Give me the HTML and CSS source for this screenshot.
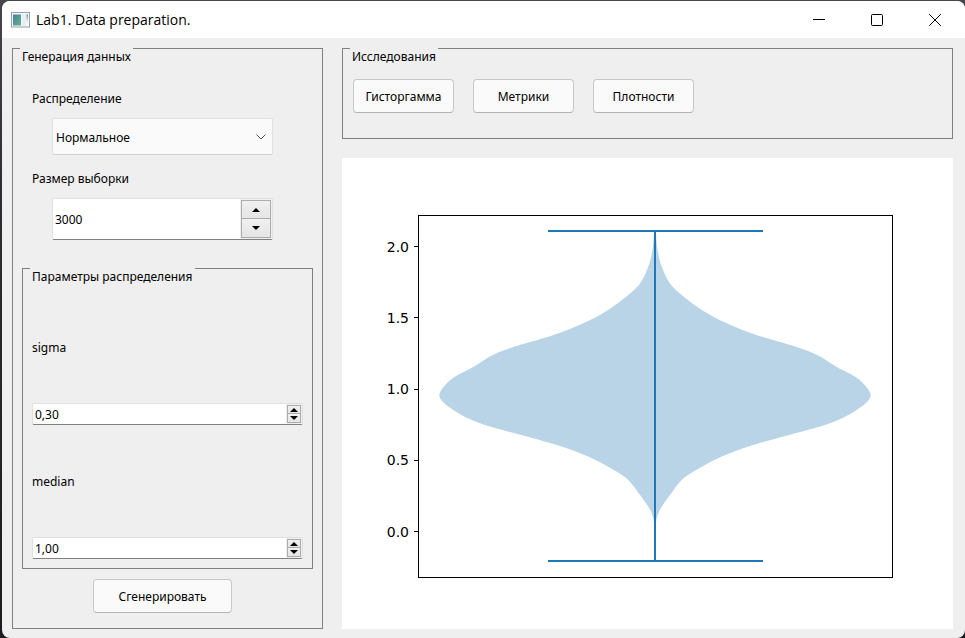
FILE: index.html
```html
<!DOCTYPE html>
<html lang="ru">
<head>
<meta charset="utf-8">
<meta name="viewport" content="width=device-width, initial-scale=1">
<title>Lab1. Data preparation.</title>
<link rel="stylesheet" href="styles.css">
</head>
<body>
<div class="window">
  <header class="titlebar">
    <svg class="app-icon" viewBox="0 0 19 16" aria-hidden="true">
      <defs>
        <linearGradient id="pane" x1="0" y1="0" x2="1" y2="1">
          <stop offset="0" stop-color="#4a7fa6"/>
          <stop offset="1" stop-color="#5fb58a"/>
        </linearGradient>
        <linearGradient id="side" x1="0" y1="0" x2="0" y2="1">
          <stop offset="0" stop-color="#5d8fc0"/>
          <stop offset="1" stop-color="#dff0e4"/>
        </linearGradient>
      </defs>
      <rect x="0.5" y="0.5" width="18" height="14.5" fill="#f4f6f8" stroke="#9a9fa5"/>
      <rect x="2" y="2.5" width="8" height="11" fill="url(#pane)"/>
      <rect x="11" y="2.5" width="4" height="11" fill="#e9eef2"/>
      <rect x="15.5" y="2.5" width="1.5" height="7" fill="url(#side)"/>
    </svg>
    <h1 class="title">Lab1. Data preparation.</h1>
    <div class="caption-buttons">
      <button class="caption" type="button" aria-label="Minimize"><svg viewBox="0 0 12 12"><path d="M0 5.5H12"/></svg></button>
      <button class="caption" type="button" aria-label="Maximize"><svg viewBox="0 0 12 12"><rect x="0.5" y="0.5" width="11" height="11" rx="1"/></svg></button>
      <button class="caption" type="button" aria-label="Close"><svg viewBox="0 0 12 12"><path d="M0.2 0.2L11.8 11.8M11.8 0.2L0.2 11.8"/></svg></button>
    </div>
  </header>

  <main class="client">
    <form class="group generator" aria-labelledby="gen-title">
      <h2 class="group-title" id="gen-title">Генерация данных</h2>
      <div class="field">
        <label class="label" for="dist">Распределение</label>
        <div class="combo">
          <select id="dist"><option>Нормальное</option></select>
          <svg class="chevron" viewBox="0 0 10 6" aria-hidden="true"><path d="M0.5 0.5L5 5L9.5 0.5"/></svg>
        </div>
      </div>
      <div class="field">
        <label class="label" for="size">Размер выборки</label>
        <div class="spin spin-large">
          <input id="size" type="text" inputmode="numeric" value="3000">
          <div class="steps">
            <button type="button" aria-label="Больше"><svg viewBox="0 0 8 4"><path d="M4 0L8 4H0Z"/></svg></button>
            <button type="button" aria-label="Меньше"><svg viewBox="0 0 8 4"><path d="M0 0H8L4 4Z"/></svg></button>
          </div>
        </div>
      </div>

      <section class="group params" aria-labelledby="par-title">
        <h2 class="group-title" id="par-title">Параметры распределения</h2>
        <div class="param-list">
          <div class="param">
            <label class="label" for="sigma">sigma</label>
            <div class="spin">
              <input id="sigma" type="text" inputmode="decimal" value="0,30">
              <div class="steps">
                <button type="button" aria-label="Больше"><svg viewBox="0 0 8 4"><path d="M4 0L8 4H0Z"/></svg></button>
                <button type="button" aria-label="Меньше"><svg viewBox="0 0 8 4"><path d="M0 0H8L4 4Z"/></svg></button>
              </div>
            </div>
          </div>
          <div class="param">
            <label class="label" for="median">median</label>
            <div class="spin">
              <input id="median" type="text" inputmode="decimal" value="1,00">
              <div class="steps">
                <button type="button" aria-label="Больше"><svg viewBox="0 0 8 4"><path d="M4 0L8 4H0Z"/></svg></button>
                <button type="button" aria-label="Меньше"><svg viewBox="0 0 8 4"><path d="M0 0H8L4 4Z"/></svg></button>
              </div>
            </div>
          </div>
        </div>
      </section>
      <button class="push generate" type="button">Сгенерировать</button>
    </form>

    <div class="results">
      <section class="group" aria-labelledby="res-title">
        <h2 class="group-title" id="res-title">Исследования</h2>
        <div class="actions">
          <button class="push" type="button">Гисторгамма</button>
          <button class="push" type="button">Метрики</button>
          <button class="push" type="button">Плотности</button>
        </div>
      </section>
      <figure class="plot">
        <svg viewBox="342 158 611 471" role="img" aria-label="Violin plot">
          <defs>
            <path id="half" d="M0 232L1 232C1.2 240 2 248 3.5 255C4.5 260 5.8 264.5 7.5 268.5C9.4 273.5 11.5 278.5 15 283.5C19.5 290 36 303 48.5 311C61 319 81 328 100 334.5C114 339.3 134 344 151.7 350.5C167 356 170 360 180 366C187 370.2 195 373 201.7 377.7C209.5 383.2 215.7 391.5 215.7 395.5C215.7 399.8 208.5 405.8 201.7 410C190 417.5 179 422.5 165 426.5C150 431 118 439 101.7 444C84 449.3 64 456.8 48.5 465.7C42 469.5 34 473.5 28.5 478.3C23 483.2 20.3 488 16.7 492.7C13 497.5 9.3 502.5 6.7 506.7C4 511 2 516 1 522L0 526Z"/>
          </defs>
          <g class="violin">
            <use href="#half" transform="translate(655 0)"/>
            <use href="#half" transform="translate(655 0) scale(-1 1)"/>
          </g>
          <path class="extent" d="M548 231H763M548 561H763M655 231V561"/>
          <rect class="axes" x="418.5" y="215.5" width="474" height="362"/>
          <path class="axes" d="M414 246.5H418M414 317.5H418M414 389.5H418M414 460.5H418M414 531.5H418"/>
          <g class="ticks">
            <text x="409" y="252">2.0</text>
            <text x="409" y="323">1.5</text>
            <text x="409" y="394">1.0</text>
            <text x="409" y="465">0.5</text>
            <text x="409" y="537">0.0</text>
          </g>
        </svg>
      </figure>
    </div>
  </main>
</div>
</body>
</html>
```
FILE: styles.css
```css
* { box-sizing: border-box; }

body {
  margin: 0;
  padding: 1px 0 0 2px;
  background: linear-gradient(#46464a, #2c2e31 30%, #1c1c1e);
  color: #000;
  font: 12px/16px "Noto Sans", sans-serif;
}

button, input, select { font: inherit; color: inherit; margin: 0; }

.window {
  display: flex;
  flex-direction: column;
  min-height: calc(100vh - 1px);
  border-radius: 8px;
  background: #efefef;
  overflow: hidden;
}

.titlebar {
  display: flex;
  align-items: center;
  height: 37px;
  padding: 0 1px 0 9px;
  background: #fff;
}
.app-icon { width: 19px; height: 16px; }
.title {
  flex: 1;
  margin: 0 0 0 6px;
  font: 14px/20px "Open Sans", sans-serif;
}
.caption-buttons { display: flex; }
.caption {
  display: grid;
  place-items: center;
  width: 58px;
  height: 36px;
  padding: 0;
  border: 0;
  background: none;
}
.caption svg { width: 12px; height: 12px; fill: none; stroke: #000; }

.client {
  flex: 1;
  display: grid;
  grid-template-columns: 311px 1fr;
  gap: 19px;
  padding: 10px 12px 9px 10px;
}

.group { border: 1px solid #808080; }
.group-title {
  width: fit-content;
  margin: -1px 0 0 7px;
  padding: 1px 2px 0;
  background: #efefef;
  font: inherit;
}

.generator {
  display: flex;
  flex-direction: column;
  padding-bottom: 15px;
}
.field { padding: 0 49px 0 19px; }
.field:nth-of-type(1) { margin-top: 25px; }
.field:nth-of-type(2) { margin-top: 15px; }
.label { display: block; padding-top: 1px; }
.combo, .spin-large { margin: 11px 0 0 20px; }

.combo { display: grid; align-items: center; }
.combo > * { grid-area: 1 / 1; }
.combo select {
  appearance: none;
  width: 100%;
  height: 37px;
  padding: 2px 24px 0 3px;
  border: 1px solid #e0e0e0;
  border-bottom-color: #cfcfcf;
  border-radius: 2px;
  background: #fafafa;
}
.chevron {
  justify-self: end;
  width: 10px;
  height: 6px;
  margin-right: 7px;
  fill: none;
  stroke: #555;
  pointer-events: none;
}

.spin {
  display: flex;
  height: 22px;
  border: 1px solid #e0e0e0;
  border-bottom-color: #808080;
  border-radius: 2px;
  background: #fff;
}
.spin input {
  flex: 1;
  min-width: 0;
  padding: 2px 2px 0;
  border: 0;
  background: none;
  outline: 0;
}
.steps {
  display: grid;
  grid-template-rows: 1fr 1fr;
  width: 16px;
  padding: 1px;
  background: #efefef;
}
.steps button {
  display: grid;
  place-items: center;
  min-height: 0;
  padding: 0;
  border: 1px solid #acacac;
  background: linear-gradient(#f0f0f0, #e5e5e5);
}
.steps button + button { border-top: 0; }
.steps svg { width: 8px; height: 4px; }
.spin-large { height: 42px; }
.spin-large .steps { width: 32px; }

.params { margin: 28px 9px 0; padding: 0 0 9px; }
.param-list {
  display: grid;
  gap: 48px;
  margin-top: 54px;
  padding: 0 9px;
}
.param { display: grid; gap: 47px; }

.push {
  width: 101px;
  height: 34px;
  padding: 2px 0 0;
  border: 1px solid #c8c8c8;
  border-bottom-color: #b4b4b4;
  border-radius: 4px;
  background: #fafafa;
}
.generate { width: 139px; margin: 10px 0 0 80px; }

.results { display: flex; flex-direction: column; gap: 19px; min-width: 0; }
.actions {
  display: flex;
  flex-wrap: wrap;
  gap: 19px;
  padding: 14px 10px 25px;
}
.plot { flex: 1; margin: 0; background: #fff; }
.plot svg { display: block; width: 100%; }
.violin { fill: #b9d4e7; }
.extent { fill: none; stroke: #1f77b4; stroke-width: 2; }
.axes { fill: none; stroke: #000; }
.ticks { font: 14px "DejaVu Sans", sans-serif; text-anchor: end; }
```
